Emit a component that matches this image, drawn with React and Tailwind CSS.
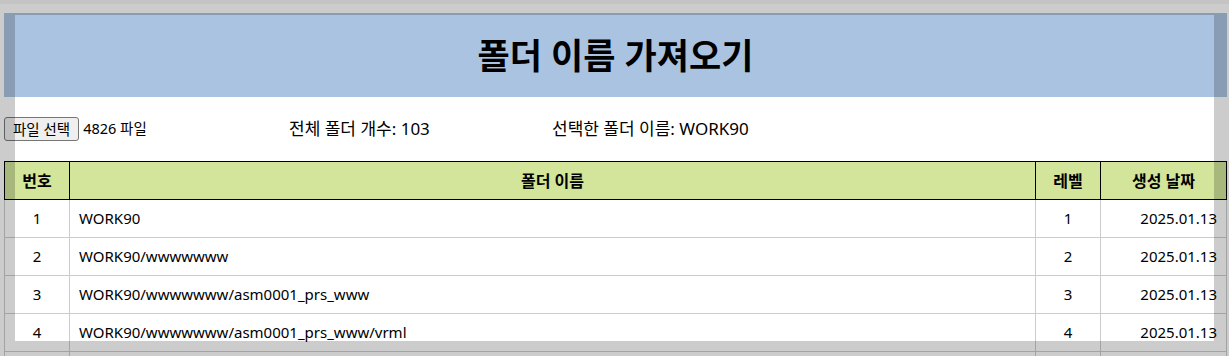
import React from "react";

const W7 = "w".repeat(7);

const rows = [
  { no: 1, name: "WORK90", level: 1, date: "2025.01.13" },
  { no: 2, name: `WORK90/${W7}`, level: 2, date: "2025.01.13" },
  { no: 3, name: `WORK90/${W7}/asm0001_prs_www`, level: 3, date: "2025.01.13" },
  { no: 4, name: `WORK90/${W7}/asm0001_prs_www/vrml`, level: 4, date: "2025.01.13" },
  { no: 5, name: `WORK90/${W7}/asm0001_prs_www/vrml/a`, level: 5, date: "2025.01.13" },
];

export default function App() {
  return (
    <div
      className="relative h-[356px] w-[1229px] overflow-hidden bg-white text-black"
      style={{ fontFamily: '"Noto Sans", "Noto Sans CJK KR", sans-serif' }}
    >
      <div className="h-[4px] bg-[#f5f5f5]" />
      <div className="pl-[4px] pr-[2px] pt-[9px]">
        <header className="flex h-[84px] items-center justify-center bg-[#aac3e1]">
          <h1 className="text-[35px] font-bold leading-none">폴더 이름 가져오기</h1>
        </header>
        <div className="flex h-[64px] items-center text-[17px]">
          <div className="flex w-[285px] items-center">
            <button className="h-[24px] rounded-[3px] border border-[#767676] bg-[#efefef] px-[8px] text-[14.5px] leading-none">
              파일 선택
            </button>
            <span className="ml-[4px] text-[14.5px]">4826 파일</span>
          </div>
          <span className="w-[263px]">전체 폴더 개수: 103</span>
          <span>선택한 폴더 이름: WORK90</span>
        </div>
        <table className="w-full border-collapse text-[15px]">
          <thead>
            <tr className="h-[38px] bg-[#d3e59b] text-[16px] font-bold">
              <th className="w-[65px] border border-black">번호</th>
              <th className="border border-black">폴더 이름</th>
              <th className="w-[65px] border border-black">레벨</th>
              <th className="w-[126px] border border-black">생성 날짜</th>
            </tr>
          </thead>
          <tbody>
            {rows.map((r) => (
              <tr key={r.no} className="h-[38px]">
                <td className="border border-[#cccccc] text-center">{r.no}</td>
                <td className="border border-[#cccccc] px-[9px]">{r.name}</td>
                <td className="border border-[#cccccc] text-center">{r.level}</td>
                <td className="border border-[#cccccc] pr-[9px] text-right">{r.date}</td>
              </tr>
            ))}
          </tbody>
        </table>
      </div>
      <div className="pointer-events-none absolute inset-0 border-[15px] border-[rgba(0,0,0,0.2)]" />
    </div>
  );
}
